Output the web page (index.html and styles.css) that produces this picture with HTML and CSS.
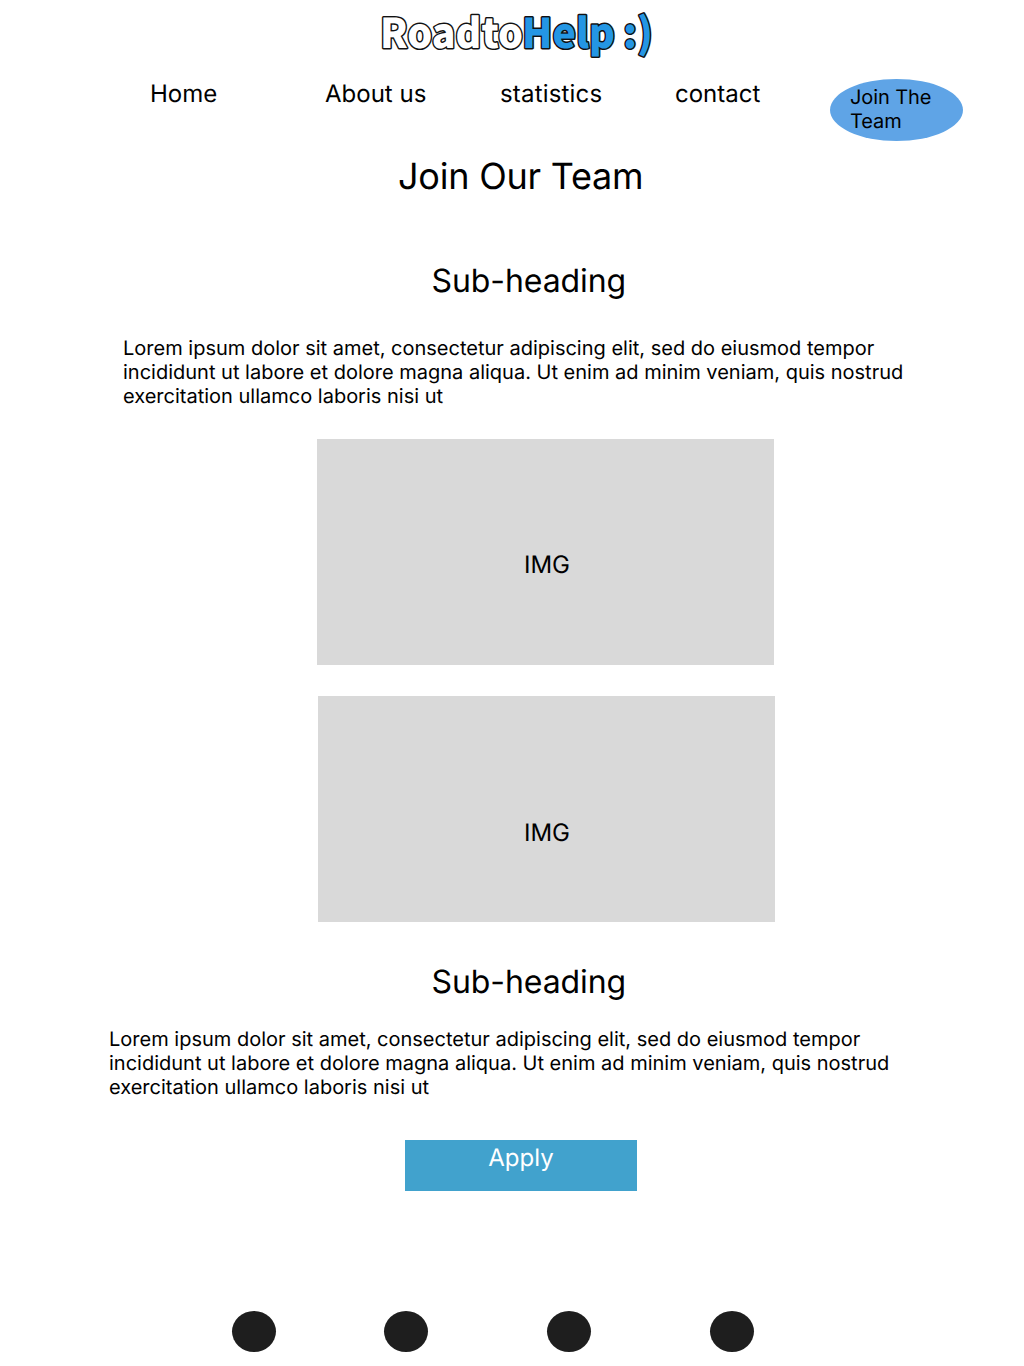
FILE: index.html
```html
<!DOCTYPE html>
<html lang="en">
<head>
<meta charset="utf-8">
<title>Join Our Team</title>
<link rel="stylesheet" href="styles.css">
</head>
<body>
<header>
  <svg class="logo" width="290" height="64" viewBox="0 0 290 64" role="img" aria-label="RoadtoHelp :)">
    <text class="logo-text logo-light" x="10" y="48.3" textLength="143" lengthAdjust="spacingAndGlyphs">Roadto</text>
    <text class="logo-text logo-blue" x="152" y="48.3" textLength="93" lengthAdjust="spacingAndGlyphs">Help</text>
    <text class="logo-text logo-blue" x="253" y="48.3" textLength="30" lengthAdjust="spacingAndGlyphs">:)</text>
  </svg>
  <nav class="nav">
    <a>Home</a><a>About us</a><a class="statistics">statistics</a><a>contact</a>
    <a class="join">Join The<br>Team</a>
  </nav>
</header>
<main>
  <h1>Join Our Team</h1>
  <h2 class="first-heading">Sub-heading</h2>
  <p class="intro">Lorem ipsum dolor sit amet, consectetur adipiscing elit, sed do eiusmod tempor incididunt ut labore et dolore magna aliqua. Ut enim ad minim veniam, quis nostrud exercitation ullamco laboris nisi ut</p>
  <div class="image image-one">IMG</div>
  <div class="image image-two">IMG</div>
  <h2 class="second-heading">Sub-heading</h2>
  <p class="details">Lorem ipsum dolor sit amet, consectetur adipiscing elit, sed do eiusmod tempor incididunt ut labore et dolore magna aliqua. Ut enim ad minim veniam, quis nostrud exercitation ullamco laboris nisi ut</p>
  <a class="apply">Apply</a>
</main>
<footer><span class="dot"></span><span class="dot"></span><span class="dot"></span><span class="dot"></span></footer>
</body>
</html>
```
FILE: styles.css
```css
* { box-sizing: border-box; }
body { margin: 0; height: 1366px; overflow: hidden; background: #fff; color: #000; font-family: Inter, sans-serif; font-size: 20px; line-height: 24px; text-rendering: geometricPrecision; }
header { height: 141px; }
.logo { display: block; margin-left: 370px; }
.logo-text { font-family: "Noto Sans CJK JP", sans-serif; font-size: 41px; font-weight: 900; stroke: #111; stroke-width: 3px; paint-order: stroke; stroke-linejoin: round; }
.logo-light { fill: #fff; }
.logo-blue { fill: #2496e4; }
.nav { display: grid; grid-template-columns: 175px 175px 175px 155px 133px; padding: 15px 0 0 150px; font-size: 24px; line-height: 29px; }
.statistics { letter-spacing: 0.18px; }
.join { width: 133px; height: 62px; padding: 6px 0 0 20px; border-radius: 50%; background: #5fa4e6; font-size: 20px; line-height: 24px; letter-spacing: -0.08px; }
h1, h2, p { margin: 0; font-weight: 400; }
h1 { margin: 13px 0 0 398px; font-size: 36px; line-height: 44px; letter-spacing: -0.22px; }
h2 { margin-left: 431.5px; font-size: 32px; line-height: 39px; letter-spacing: -0.08px; }
.first-heading { margin-top: 63px; }
.intro { width: 803px; margin: 36px 0 0 123px; }
.image { display: flex; justify-content: center; width: 457px; height: 226px; background: #d9d9d9; font-size: 24px; line-height: 29px; }
.image-one { margin: 31px 0 0 317px; padding: 111px 0 0 3px; }
.image-two { margin: 31px 0 0 318px; padding: 122px 0 0 1px; }
.second-heading { margin-top: 40px; }
.details { width: 803px; margin: 26px 0 0 109px; }
.apply { display: block; width: 232px; height: 51px; margin: 41px 0 0 405px; padding-top: 3px; background: #41a2cd; color: #fff; font-size: 24px; line-height: 29px; text-align: center; }
footer { display: grid; grid-template-columns: 152px 163px 163px 44px; padding: 120px 0 0 232px; }
.dot { width: 44px; height: 41px; border-radius: 50%; background: #1e1e1e; }
```
